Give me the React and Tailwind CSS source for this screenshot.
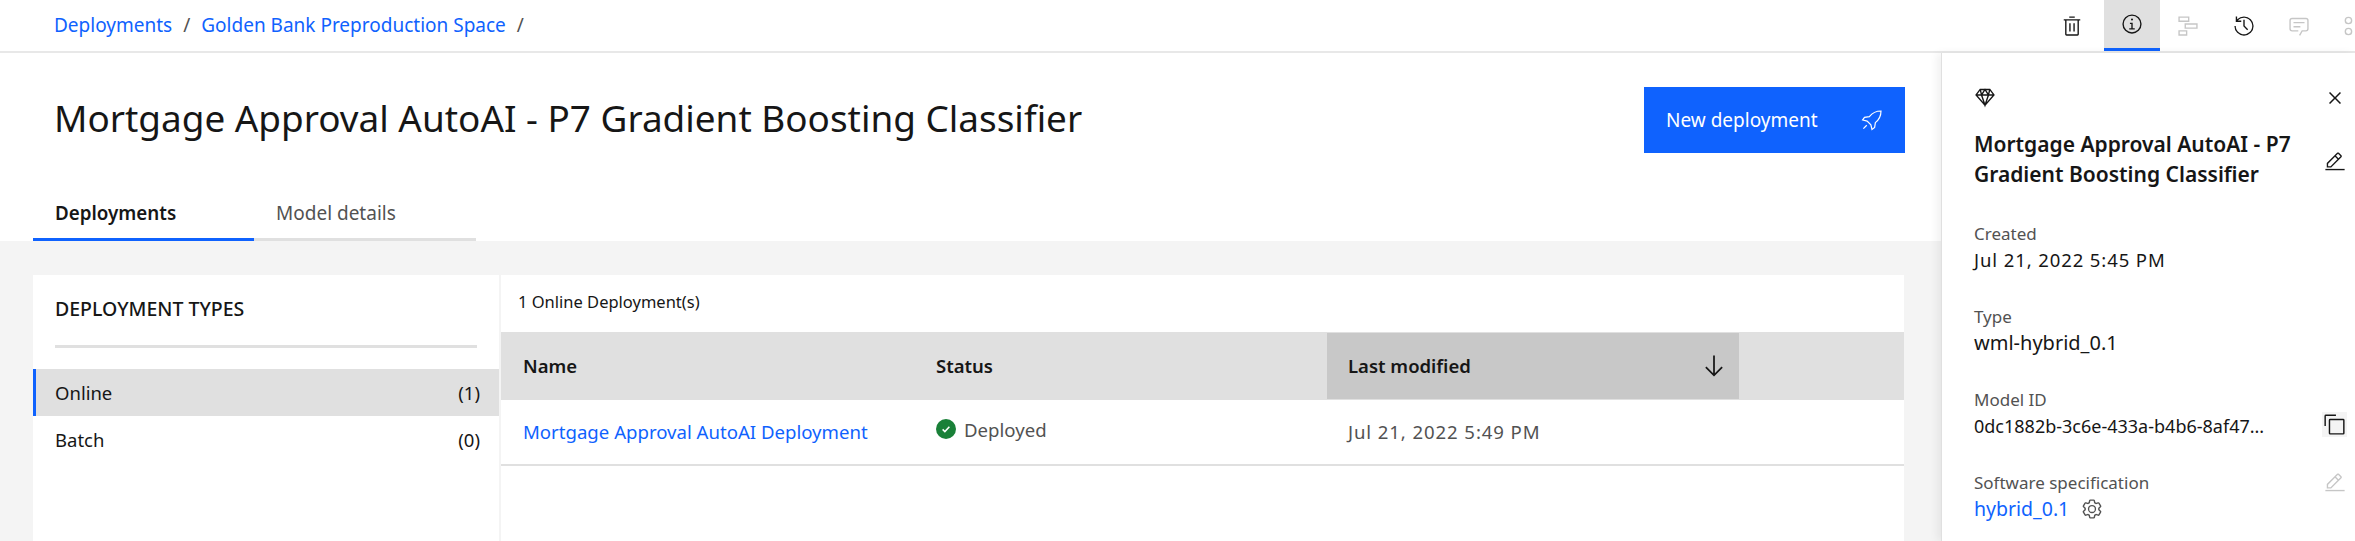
import React from "react";

const Icon = ({ className = "", children, ...rest }) => (
  <svg viewBox="0 0 32 32" fill="currentColor" className={`shrink-0 ${className}`} {...rest}>
    {children}
  </svg>
);

const TrashIcon = (p) => (
  <Icon {...p}>
    <path d="M12 12h2v12h-2zM18 12h2v12h-2z" />
    <path d="M4 6v2h2v20a2 2 0 0 0 2 2h16a2 2 0 0 0 2-2V8h2V6zm4 22V8h16v20zM12 2h8v2h-8z" />
  </Icon>
);
const InfoIcon = (p) => (
  <Icon {...p}>
    <path d="M17 22v-8h-4v2h2v6h-3v2h8v-2h-3zM16 8a1.5 1.5 0 1 0 1.5 1.5A1.5 1.5 0 0 0 16 8z" />
    <path d="M16 30a14 14 0 1 1 14-14 14 14 0 0 1-14 14zm0-26a12 12 0 1 0 12 12A12 12 0 0 0 16 4z" />
  </Icon>
);
const StepsIcon = (p) => (
  <Icon {...p}>
    <path d="M2 2h16v8H2zm2 2v4h12V4zM11 12h19v8H11zm2 2v4h15v-4zM2 22h13v8H2zm2 2v4h9v-4z" fillRule="evenodd" />
  </Icon>
);
const HistoryIcon = (p) => (
  <Icon {...p}>
    <path d="M20.59 22L15 16.41V7h2v8.58l5 5.01L20.59 22z" />
    <path d="M16 2A13.94 13.94 0 0 0 6 6.23V2H4v8h8V8H7.08A12 12 0 1 1 4 16H2A14 14 0 1 0 16 2z" />
  </Icon>
);
const CommentIcon = (p) => (
  <Icon {...p}>
    <path d="M17.74 30L16 29l4-7h6a2 2 0 0 0 2-2V8a2 2 0 0 0-2-2H6a2 2 0 0 0-2 2v12a2 2 0 0 0 2 2h9v2H6a4 4 0 0 1-4-4V8a4 4 0 0 1 4-4h20a4 4 0 0 1 4 4v12a4 4 0 0 1-4 4h-4.84z" />
    <path d="M8 10h16v2H8zM8 16h10v2H8z" />
  </Icon>
);
const CirclesIcon = (p) => (
  <Icon {...p}>
    <circle cx="6.5" cy="8" r="4.6" fill="none" stroke="currentColor" strokeWidth="2" />
    <circle cx="6.5" cy="24" r="4.6" fill="none" stroke="currentColor" strokeWidth="2" />
  </Icon>
);
const CloseIcon = (p) => (
  <Icon {...p}>
    <path d="M24 9.4L22.6 8 16 14.6 9.4 8 8 9.4 14.6 16 8 22.6 9.4 24 16 17.4 22.6 24 24 22.6 17.4 16 24 9.4z" />
  </Icon>
);
const EditIcon = (p) => (
  <Icon {...p}>
    <path d="M2 26h28v2H2z" />
    <path d="M25.4 9c.8-.8.8-2 0-2.8l-3.6-3.6c-.8-.8-2-.8-2.8 0l-15 15V24h6.4l15-15zm-5-5L24 7.6l-3 3L17.4 7l3-3zM6 22v-3.6l10-10 3.6 3.6-10 10H6z" />
  </Icon>
);
const CopyIcon = (p) => (
  <Icon {...p}>
    <path d="M28 10v18H10V10h18m0-2H10a2 2 0 0 0-2 2v18a2 2 0 0 0 2 2h18a2 2 0 0 0 2-2V10a2 2 0 0 0-2-2z" />
    <path d="M4 18H2V4a2 2 0 0 1 2-2h14v2H4z" />
  </Icon>
);
const ArrowDownIcon = (p) => (
  <Icon {...p}>
    <path d="M24.59 16.59L17 24.17V4h-2v20.17l-7.59-7.58L6 18l10 10 10-10-1.41-1.41z" />
  </Icon>
);
const GearIcon = (p) => (
  <Icon {...p}>
    <path d="M27 16.76c0-.25 0-.5 0-.76s0-.51 0-.77l1.92-1.68A2 2 0 0 0 29.3 11l-2.36-4a2 2 0 0 0-1.73-1 2 2 0 0 0-.64.1l-2.43.82a11.35 11.35 0 0 0-1.31-.75l-.51-2.52a2 2 0 0 0-2-1.61h-4.68a2 2 0 0 0-2 1.61l-.51 2.52a11.48 11.48 0 0 0-1.32.75l-2.38-.86A2 2 0 0 0 6.79 6a2 2 0 0 0-1.73 1L2.7 11a2 2 0 0 0 .41 2.51L5 15.24c0 .25 0 .5 0 .76s0 .51 0 .77l-1.92 1.68A2 2 0 0 0 2.7 21l2.36 4a2 2 0 0 0 1.73 1 2 2 0 0 0 .64-.1l2.43-.82a11.35 11.35 0 0 0 1.31.75l.51 2.52a2 2 0 0 0 2 1.61h4.72a2 2 0 0 0 2-1.61l.51-2.52a11.48 11.48 0 0 0 1.32-.75l2.42.82a2 2 0 0 0 .64.1 2 2 0 0 0 1.73-1l2.28-4a2 2 0 0 0-.41-2.51zM25.21 24l-3.43-1.16a8.86 8.86 0 0 1-2.71 1.57L18.36 28h-4.72l-.71-3.55a9.36 9.36 0 0 1-2.7-1.57L6.79 24l-2.36-4 2.72-2.4a8.9 8.9 0 0 1 0-3.13L4.43 12l2.36-4 3.43 1.16a8.86 8.86 0 0 1 2.71-1.57L13.64 4h4.72l.71 3.55a9.36 9.36 0 0 1 2.7 1.57L25.21 8l2.36 4-2.72 2.4a8.9 8.9 0 0 1 0 3.13L27.57 20z" />
    <path d="M16 22a6 6 0 1 1 6-6 5.94 5.94 0 0 1-6 6zm0-10a3.91 3.91 0 0 0-4 4 3.91 3.91 0 0 0 4 4 3.91 3.91 0 0 0 4-4 3.91 3.91 0 0 0-4-4z" />
  </Icon>
);
const RocketIcon = (p) => (
  <Icon {...p}>
    <path
      d="M28 4c-6.500 0-11.500 2.500-15.500 7.500L6 12.500 3.500 16l6 1.500 5 5L16 28.500l3.500-2.500 1-6.500C25.500 15.500 28 10.500 28 4zM9 23l-4.500 4.500"
      fill="none"
      stroke="currentColor"
      strokeWidth="1.6"
    />
  </Icon>
);
const GemIcon = (p) => (
  <Icon {...p}>
    <path
      d="M9 5h14l6 8-13 15L3 13zM3 13h26M11 13l5 15 5-15M9 5l2 8 5-8 5 8 2-8"
      fill="none"
      stroke="currentColor"
      strokeWidth="2"
    />
  </Icon>
);

function Field({ label, children, action }) {
  return (
    <div className="flex h-[83px] flex-col">
      <div className="flex h-[28px] items-center justify-between">
        <span className="text-[17px] text-[#525252]">{label}</span>
        {action}
      </div>
      {children}
    </div>
  );
}

export default function App() {
  return (
    <div className="flex h-[541px] w-full flex-col overflow-hidden bg-white font-['Noto_Sans','Open_Sans',sans-serif] text-[#161616]">
      <header className="flex h-[53px] shrink-0 items-stretch border-b-2 border-[#e8e8e8]">
        <nav className="flex flex-1 items-center gap-[11px] pl-[54px] text-[19px] text-[#0f62fe]">
          <a>Deployments</a>
          <span className="text-[#525252]">/</span>
          <a>Golden Bank Preproduction Space</a>
          <span className="text-[#525252]">/</span>
        </nav>
        <div className="flex">
          <button className="mr-1 flex w-[56px] items-center justify-center">
            <TrashIcon className="h-[22px] w-[22px]" />
          </button>
          <button className="flex w-[56px] items-center justify-center border-b-[3px] border-[#0f62fe] bg-[#e0e0e0]">
            <InfoIcon className="h-[22px] w-[22px]" />
          </button>
          <button className="flex w-[56px] items-center justify-center text-[#c6c6c6]">
            <StepsIcon className="h-[22px] w-[22px]" />
          </button>
          <button className="flex w-[55px] items-center justify-center">
            <HistoryIcon className="h-[22px] w-[22px]" />
          </button>
          <button className="flex w-[55px] items-center justify-center text-[#c6c6c6]">
            <CommentIcon className="h-[22px] w-[22px]" />
          </button>
          <button className="flex w-[29px] items-center overflow-hidden pl-[18px] text-[#c6c6c6]">
            <CirclesIcon className="h-[22px] w-[22px]" />
          </button>
        </div>
      </header>

      <div className="flex min-h-0 flex-1">
        <main className="flex min-w-0 flex-1 flex-col">
          <section className="flex h-[188px] shrink-0 flex-col">
            <div className="flex items-start justify-between pl-[54px] pr-[36px] pt-[34px]">
              <h1 className="text-[36.900px] leading-[62px] font-normal">
                Mortgage Approval AutoAI - P7 Gradient Boosting Classifier
              </h1>
              <button className="flex h-[66px] w-[261px] items-center justify-between bg-[#0f62fe] pl-[22px] pr-[21px] text-[19px] text-white">
                New deployment
                <RocketIcon className="h-6 w-6" />
              </button>
            </div>
            <div className="mt-auto flex pl-[33px] text-[19px]">
              <div className="flex h-[50px] w-[221px] items-center border-b-[3px] border-[#0f62fe] pb-[2px] pl-[22px] text-[18.800px] font-semibold">
                Deployments
              </div>
              <div className="flex h-[50px] w-[222px] items-center border-b-[3px] border-[#e0e0e0] pb-[2px] pl-[22px] text-[#525252]">
                Model details
              </div>
            </div>
          </section>

          <section className="flex min-h-0 flex-1 gap-[2px] bg-[#f4f4f4] pl-[33px] pr-[37px] pt-[34px]">
            <aside className="w-[466px] shrink-0 bg-white">
              <div className="mx-[22px] border-b-[3px] border-[#e0e0e0] pb-[26px] pt-[24px]">
                <h2 className="text-[19.500px] leading-5 font-medium">DEPLOYMENT TYPES</h2>
              </div>
              <ul className="mt-[21px] text-[18.500px]">
                <li className="flex h-[47px] items-center justify-between border-l-[3px] border-[#0f62fe] bg-[#e0e0e0] pl-[19px] pr-[19px]">
                  <span>Online</span>
                  <span>(1)</span>
                </li>
                <li className="flex h-[47px] items-center justify-between pl-[22px] pr-[19px]">
                  <span>Batch</span>
                  <span>(0)</span>
                </li>
              </ul>
            </aside>

            <div className="min-w-0 flex-1 bg-white">
              <div className="flex h-[57px] items-center pb-[2px] pl-[17px] text-[16.500px]">1 Online Deployment(s)</div>
              <div className="grid h-[68px] grid-cols-[413px_413px_412px_1fr] items-center bg-[#e0e0e0] text-[18.500px] font-semibold">
                <div className="pl-[22px]">Name</div>
                <div className="pl-[22px]">Status</div>
                <div className="my-px flex h-[66px] items-center justify-between bg-[#c8c8c8] pl-[21px] pr-[11px]">
                  <span>Last modified</span>
                  <ArrowDownIcon className="h-7 w-7" />
                </div>
                <div />
              </div>
              <div className="grid h-[66px] grid-cols-[413px_413px_412px_1fr] items-center border-b-2 border-[#e0e0e0] text-[18.600px]">
                <a className="pl-[22px] text-[#0f62fe]">Mortgage Approval AutoAI Deployment</a>
                <div className="flex items-center gap-[8px] pb-[5px] pl-[22px] text-[#525252]">
                  <span className="flex h-[20px] w-[20px] items-center justify-center rounded-full bg-[#198038]">
                    <svg viewBox="0 0 16 16" className="h-3 w-3" fill="none" stroke="white" strokeWidth="2">
                      <path d="M3.500 8.500l3 3 6-6.500" />
                    </svg>
                  </span>
                  Deployed
                </div>
                <div className="pl-[21px] tracking-[0.9px] text-[#525252]">Jul 21, 2022 5:49 PM</div>
                <div />
              </div>
            </div>
          </section>
        </main>

        <aside className="w-[414px] shrink-0 border-l border-[#e0e0e0] pl-[32px] pr-[8px] shadow-[-4px_0_8px_rgba(0,0,0,0.06)]">
          <div className="flex h-[75px] items-start justify-between pt-[33px]">
            <GemIcon className="h-[22px] w-[22px]" />
            <CloseIcon className="h-6 w-6" />
          </div>
          <div className="flex h-[62px] items-center justify-between">
            <h2 className="w-[350px] text-[21px] leading-[30px] font-semibold">
              Mortgage Approval AutoAI - P7 Gradient Boosting Classifier
            </h2>
            <EditIcon className="mb-[-6px] mr-[1px] h-[22px] w-[22px]" />
          </div>
          <div className="mt-[30px]">
            <Field label="Created">
              <span className="text-[18.500px] leading-6 tracking-[0.9px]">Jul 21, 2022 5:45 PM</span>
            </Field>
            <Field label="Type">
              <span className="text-[20px] leading-6">wml-hybrid_0.1</span>
            </Field>
            <div className="flex h-[83px] items-start justify-between">
              <div className="flex flex-col">
                <span className="flex h-[28px] items-center text-[17px] text-[#525252]">Model ID</span>
                <span className="w-[332px] truncate text-[18px] leading-6">0dc1882b-3c6e-433a-b4b6-8af47...</span>
              </div>
              <span className="mt-[26px] flex h-[25px] w-[25px] items-center justify-center bg-[#f4f4f4]">
                <CopyIcon className="h-[23px] w-[23px]" />
              </span>
            </div>
            <Field
              label="Software specification"
              action={<EditIcon className="mr-[1px] h-[22px] w-[22px] text-[#c6c6c6]" />}
            >
              <span className="flex items-center gap-[12px] text-[19.500px] leading-6 text-[#0f62fe]">
                hybrid_0.1
                <GearIcon className="h-[22px] w-[22px] text-[#525252]" />
              </span>
            </Field>
          </div>
        </aside>
      </div>
    </div>
  );
}
